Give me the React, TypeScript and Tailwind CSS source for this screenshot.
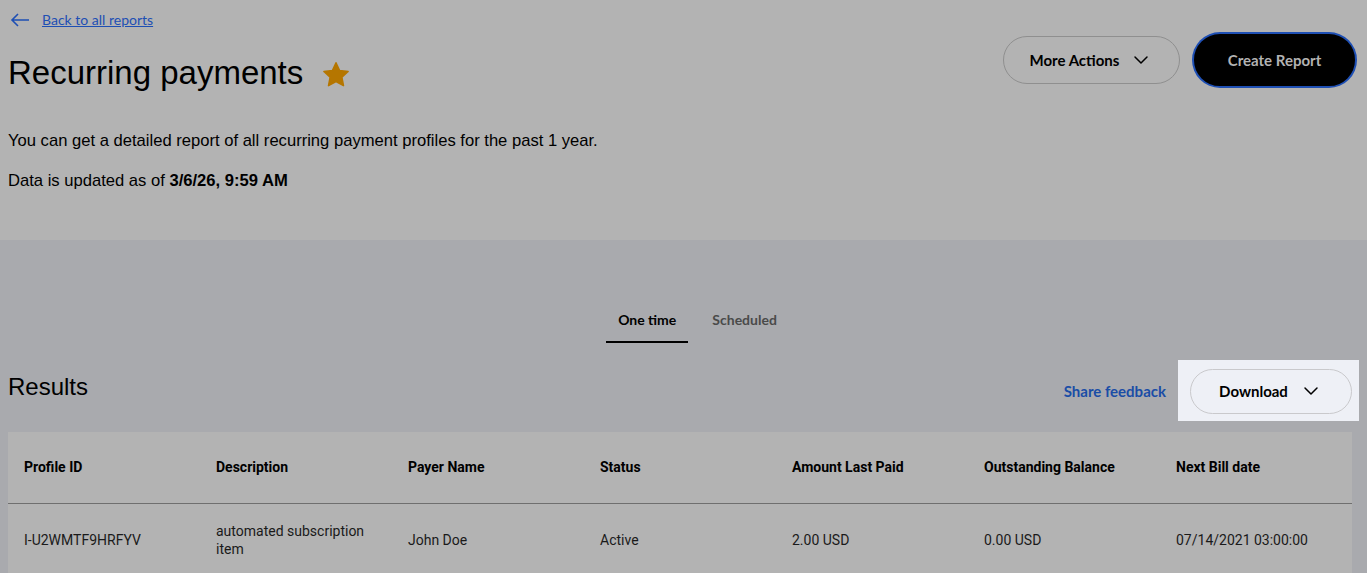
import { ChevronDown } from 'lucide-react';

const columns = [
  'Profile ID',
  'Description',
  'Payer Name',
  'Status',
  'Amount Last Paid',
  'Outstanding Balance',
  'Next Bill date',
];

const row = [
  'I-U2WMTF9HRFYV',
  'automated subscription item',
  'John Doe',
  'Active',
  '2.00 USD',
  '0.00 USD',
  '07/14/2021 03:00:00',
];

function Star() {
  return (
    <svg width="32" height="30" viewBox="0 0 24 24" className="ml-[17px] mt-1">
      <path
        d="M12 2.2l2.9 6.2 6.8.8-5 4.6 1.3 6.7L12 17.2l-6 3.3 1.3-6.7-5-4.6 6.8-.8z"
        fill="#b57600"
        stroke="#b57600"
        strokeWidth="1.2"
        strokeLinejoin="round"
      />
    </svg>
  );
}

function BackArrow() {
  return (
    <svg width="20" height="14" viewBox="0 0 20 14" className="text-[#1e4fb4]">
      <path d="M19 7H2M8 1L2 7l6 6" fill="none" stroke="currentColor" strokeWidth="1.6" />
    </svg>
  );
}

export default function App() {
  return (
    <div className="min-h-[573px] bg-[#a9aaae] font-['Roboto',sans-serif] text-black">
      <header className="bg-[#b3b3b3] px-2 pb-[46px] pt-[10px]">
        <a className="flex items-center gap-3 pl-[2px] font-['Lato',sans-serif] text-sm text-[#1e4fb4] underline">
          <BackArrow />
          <span>Back to all reports</span>
        </a>
        <div className="mt-[4px] flex items-start justify-between">
          <div className="flex items-center pt-[22px]">
            <h1 className="font-['Liberation_Sans',Arial,sans-serif] text-[33px] leading-[34px]">
              Recurring payments
            </h1>
            <Star />
          </div>
          <div className="mr-[4px] flex items-center gap-[14px] font-['Lato',sans-serif] text-[15px] font-bold">
            <button className="flex h-[48px] w-[177px] items-center justify-center gap-[10px] rounded-full border border-[#8f8f8f]">
              More Actions
              <ChevronDown size={24} strokeWidth={1.5} />
            </button>
            <button className="flex h-[52px] w-[161px] items-center justify-center rounded-full border-2 border-black bg-black text-[#b3b3b3] ring-2 ring-[#1e4fb4]">
              Create Report
            </button>
          </div>
        </div>
        <p className="mt-[39px] font-['Liberation_Sans',Arial,sans-serif] text-[16.6px]">
          You can get a detailed report of all recurring payment profiles for the past 1 year.
        </p>
        <p className="mt-[15px] font-['Liberation_Sans',Arial,sans-serif] text-[16.6px]">
          Data is updated as of <span className="font-bold">3/6/26, 9:59 AM</span>
        </p>
      </header>

      <main className="px-2 pt-[70px]">
        <nav className="flex justify-center gap-6 pl-[16px] font-['Lato',sans-serif] text-sm font-bold">
          <div className="border-b-2 border-black px-3 pb-[11px]">One time</div>
          <div className="pb-[11px] text-[#4a4a4a]">Scheduled</div>
        </nav>

        <div className="mt-[16px] flex items-start justify-between">
          <h2 className="pt-[10px] font-['Liberation_Sans',Arial,sans-serif] text-[24px]">Results</h2>
          <div className="flex items-center">
            <a className="mr-3 mt-[3px] font-['Lato',sans-serif] text-[15px] font-bold text-[#1a4da6]">
              Share feedback
            </a>
            <div className="mt-[1px] bg-[#eef0f6] pb-[7px] pl-3 pr-[7px] pt-[9px]">
              <button className="flex h-[45px] w-[162px] items-center justify-center gap-[11px] rounded-full border border-[#c9c9cc] font-['Lato',sans-serif] text-[15px] font-bold">
                Download
                <ChevronDown size={24} strokeWidth={1.5} />
              </button>
            </div>
          </div>
        </div>

        <div className="mt-[11px] w-[1344px] bg-[#b3b3b3] text-sm">
          <div className="grid h-[72px] grid-cols-[repeat(7,192px)] items-center border-b border-[#6f6f6f] font-bold">
            {columns.map((c) => (
              <div key={c} className="pl-4">
                {c}
              </div>
            ))}
          </div>
          <div className="grid h-[72px] grid-cols-[repeat(7,192px)] items-center text-[#1a1a1a]">
            {row.map((c, i) => (
              <div key={i} className="pl-4 pr-4 leading-[18px]">
                {c}
              </div>
            ))}
          </div>
        </div>
      </main>
    </div>
  );
}
